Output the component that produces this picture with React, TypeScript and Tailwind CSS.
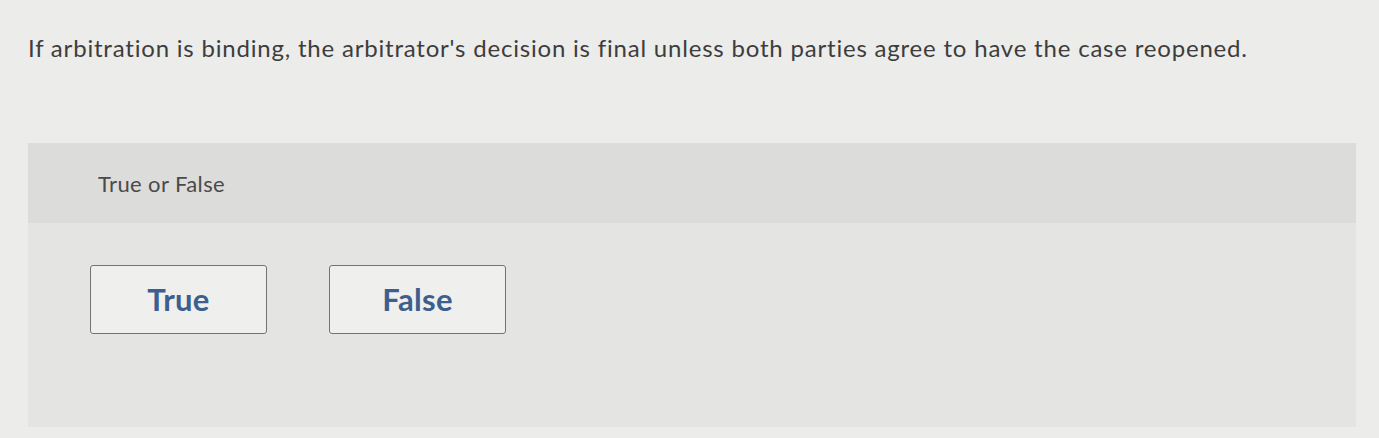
export default function App() {
  return (
    <div
      className="h-[438px] w-full overflow-hidden bg-[#ececea] pl-[28px] pr-[23px] pt-[28px]"
      style={{ fontFamily: "Lato, 'Open Sans', sans-serif" }}
    >
      <p className="text-[24px] leading-[40px] tracking-[0.8px] text-[#3d3d3d]">
        If arbitration is binding, the arbitrator's decision is final unless both parties agree to have the case reopened.
      </p>

      <section className="mt-[75px] h-[284px] bg-[#e4e4e3]">
        <div className="flex h-[80px] items-center bg-[#dcdcdb] pl-[70px]">
          <span className="text-[22px] tracking-[0.4px] text-[#4a4a4a]">True or False</span>
        </div>
        <div className="flex gap-[62px] pl-[62px] pt-[42px]">
          {["True", "False"].map((label) => (
            <button
              key={label}
              className="flex h-[69px] w-[177px] items-center justify-center rounded-[3px] border border-[#737373] bg-[#efefee] text-[31px] font-bold tracking-[0.3px] text-[#3d5f8e]"
            >
              {label}
            </button>
          ))}
        </div>
      </section>
    </div>
  );
}
